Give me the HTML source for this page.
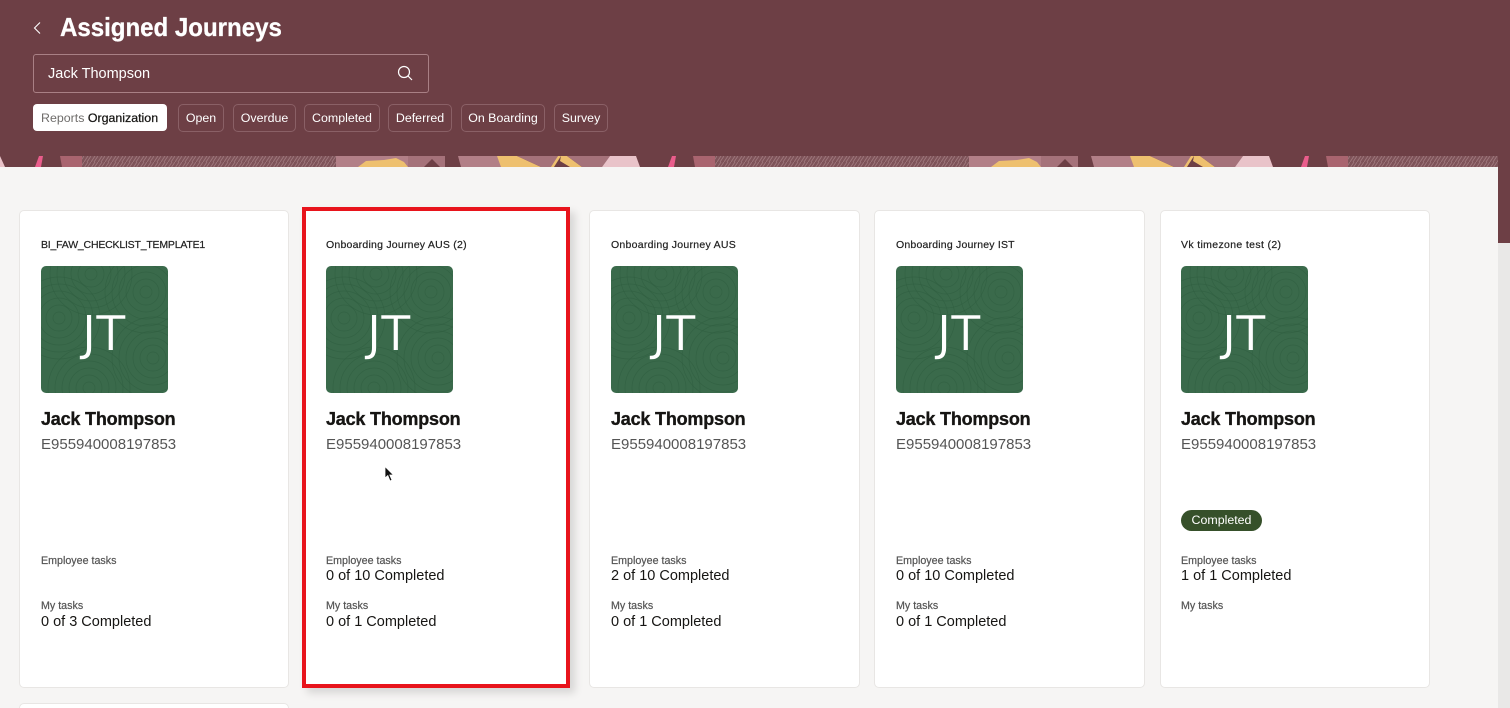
<!DOCTYPE html>
<html style="overflow:hidden;height:708px"><head><meta charset="utf-8"><style>
html,body{margin:0;padding:0}
body{width:1510px;height:708px;overflow:hidden;position:relative;background:#f5f4f2;font-family:"Liberation Sans",sans-serif}
#w{position:absolute;left:0;top:0;width:1510px;height:708px;overflow:hidden}
.a{position:absolute;white-space:nowrap}
.hdr{left:0;top:0;width:1510px;height:156px;background:#6d3f45}
.title{left:60px;top:11px;font-size:26px;line-height:32px;font-weight:700;color:#fff;transform:scaleX(.925);transform-origin:0 0;-webkit-text-stroke:.3px #fff}
.search{left:33px;top:54px;width:394px;height:37px;border:1px solid #a98085;border-radius:3px}
.st{left:48px;top:65px;font-size:14.5px;line-height:18px;color:#fff}
.chip{top:104px;height:26px;border:1px solid #8a6066;border-radius:5px;color:#fff;font-size:12.4px;line-height:26px;text-align:center}
.main{left:0;top:167px;width:1498px;height:541px;background:#f6f5f4}
.card{top:210px;width:268px;height:476px;background:#fff;border:1px solid #e8e6e4;border-radius:5px}
.ct{top:239px;font-size:10.5px;line-height:13px;color:#222;-webkit-text-stroke:.2px #222}
.av{top:266px;width:127px;height:127px}
.jt{top:305px;font:48px/58px "DejaVu Sans",sans-serif;color:#fff;-webkit-text-stroke:.6px #3b6c4d}
.nm{top:408px;font-size:18px;line-height:23px;font-weight:700;color:#161513;letter-spacing:-.2px;-webkit-text-stroke:.35px #161513}
.id{top:436px;font-size:15px;line-height:18px;color:#555}
.lb{font-size:10.7px;line-height:13px;color:#555;-webkit-text-stroke:.2px #555}
.v{font-size:14.5px;line-height:18px;color:#161513}
</style></head><body><div id="w">
<div class="a hdr"></div>
<svg class="a" style="left:0;top:156px" width="1510" height="11" viewBox="0 0 1510 11">
<defs>
<pattern id="wood" width="7" height="6" patternUnits="userSpaceOnUse"><path d="M0 6L4 0M3 6L7 0" stroke="#9f787d" stroke-width=".9" fill="none"/></pattern>
<g id="tile">
<path d="M0 0L5 11L0 11Z" fill="#e9c3c9"/>
<path d="M35 11L39 0L43 0L41 11Z" fill="#ea5d8c"/>
<path d="M60 0L90 0L86 11L62 11Z" fill="#a9646f"/>
<rect x="82" y="0" width="254" height="11" fill="#7e5359"/>
<rect x="82" y="0" width="254" height="11" fill="url(#wood)"/>
<rect x="336" y="0" width="72" height="11" fill="#b27f87"/>
<path d="M358 11L366 5L384 4L396 2L404 6L408 11Z" fill="#eec06f"/>
<path d="M408 0L445 0L445 11L408 11Z" fill="#a5727a"/>
<path d="M424 11L432 3L440 11Z" fill="#6d3f45"/>
<path d="M458 0L497 0L510 11L461 11Z" fill="#b27f87"/>
<path d="M497 0L517 0L541 11L501 11Z" fill="#eec06f"/>
<path d="M517 0L558 0L553 11L541 11Z" fill="#a5727a"/>
<path d="M558 0L561 0L554 11L551 11Z" fill="#eec06f"/>
<path d="M561 0L567 0L582 11L570 11L560 5Z" fill="#eec06f"/>
<path d="M567 0L610 0L602 11L582 11Z" fill="#a5727a"/>
<path d="M610 0L636 0L640 11L602 11Z" fill="#e9c3c9"/>
</g>
</defs>
<rect width="1510" height="11" fill="#6d3f45"/>
<use href="#tile" x="0"/><use href="#tile" x="633"/><use href="#tile" x="1266"/>
<rect x="1498" y="0" width="12" height="11" fill="#6d3f45"/>
</svg>
<div class="a" style="left:1498px;top:160px;width:12px;height:83px;background:#6d3f45"></div>
<div class="a" style="left:1498px;top:243px;width:12px;height:465px;background:#e9e8e7"></div>
<div class="a main"></div>

<svg class="a" style="left:31px;top:20px" width="14" height="16" viewBox="0 0 14 16"><path d="M9 2.500L3.500 8L9 13.500" fill="none" stroke="#fff" stroke-width="1.100"/></svg>
<div class="a title">Assigned Journeys</div>
<div class="a search"></div>
<div class="a st">Jack Thompson</div>
<svg class="a" style="left:396px;top:64px" width="18" height="18" viewBox="0 0 18 18"><circle cx="8" cy="8" r="5.500" fill="none" stroke="#fff" stroke-width="1.200"/><path d="M12 12l4 4" stroke="#fff" stroke-width="1.200"/></svg>

<div class="a" style="left:33px;top:104px;width:134px;height:27px;background:#fff;border-radius:4px"></div>
<div class="a" style="left:41px;top:110px;font-size:12.4px;line-height:16px;color:#6f6d6b">Reports <span style="color:#161513;-webkit-text-stroke:.25px #161513">Organization</span></div>
<div class="a chip" style="left:178px;width:44px">Open</div>
<div class="a chip" style="left:233px;width:61px">Overdue</div>
<div class="a chip" style="left:304px;width:74px">Completed</div>
<div class="a chip" style="left:388px;width:62px">Deferred</div>
<div class="a chip" style="left:461px;width:82px">On Boarding</div>
<div class="a chip" style="left:554px;width:52px">Survey</div>

<svg width="0" height="0" style="position:absolute"><defs>
<clipPath id="avc"><rect width="127" height="127" rx="5"/></clipPath>
<g id="rings" fill="none" stroke="#2f5d40" stroke-opacity=".6" stroke-width=".7">
<circle r="6"/><circle r="13"/><circle r="20"/><circle r="27"/><circle r="34"/><circle r="41"/>
</g>
<symbol id="avatar" viewBox="0 0 127 127"><g clip-path="url(#avc)">
<rect width="127" height="127" fill="#3a6a4b"/>
<use href="#rings" x="18" y="52"/><use href="#rings" x="105" y="26"/><use href="#rings" x="50" y="8"/><use href="#rings" x="112" y="92"/><use href="#rings" x="48" y="122"/>
</g></symbol>
</defs></svg>

<div class="a card" style="left:19px"></div>
<div class="a card" style="left:589px;width:269px"></div>
<div class="a card" style="left:874px;width:269px"></div>
<div class="a card" style="left:1160px"></div>
<div class="a" style="left:19px;top:703px;width:268px;height:20px;background:#fff;border:1px solid #e8e6e4;border-radius:5px"></div>

<div class="a" style="left:302px;top:207px;width:260px;height:473px;background:#fff;border:4px solid #e8141c;box-shadow:5px 5px 8px rgba(0,0,0,.13)"></div>

<div class="a ct" style="left:41px;letter-spacing:-.2px">BI_FAW_CHECKLIST_TEMPLATE1</div>
<svg class="a av" style="left:41px"><use href="#avatar" width="127" height="127"/></svg>
<div class="a jt" style="left:82px">JT</div>
<div class="a nm" style="left:41px">Jack Thompson</div>
<div class="a id" style="left:41px">E955940008197853</div>
<div class="a lb" style="left:41px;top:555px">Employee tasks</div>
<div class="a lb" style="left:41px;top:600px">My tasks</div>
<div class="a v" style="left:41px;top:613px">0 of 3 Completed</div>

<div class="a ct" style="left:326px;letter-spacing:.23px">Onboarding Journey AUS (2)</div>
<svg class="a av" style="left:326px"><use href="#avatar" width="127" height="127"/></svg>
<div class="a jt" style="left:367px">JT</div>
<div class="a nm" style="left:326px">Jack Thompson</div>
<div class="a id" style="left:326px">E955940008197853</div>
<div class="a lb" style="left:326px;top:555px">Employee tasks</div>
<div class="a v" style="left:326px;top:567px">0 of 10 Completed</div>
<div class="a lb" style="left:326px;top:600px">My tasks</div>
<div class="a v" style="left:326px;top:613px">0 of 1 Completed</div>

<div class="a ct" style="left:611px;letter-spacing:.27px">Onboarding Journey AUS</div>
<svg class="a av" style="left:611px"><use href="#avatar" width="127" height="127"/></svg>
<div class="a jt" style="left:652px">JT</div>
<div class="a nm" style="left:611px">Jack Thompson</div>
<div class="a id" style="left:611px">E955940008197853</div>
<div class="a lb" style="left:611px;top:555px">Employee tasks</div>
<div class="a v" style="left:611px;top:567px">2 of 10 Completed</div>
<div class="a lb" style="left:611px;top:600px">My tasks</div>
<div class="a v" style="left:611px;top:613px">0 of 1 Completed</div>

<div class="a ct" style="left:896px;letter-spacing:.2px">Onboarding Journey IST</div>
<svg class="a av" style="left:896px"><use href="#avatar" width="127" height="127"/></svg>
<div class="a jt" style="left:937px">JT</div>
<div class="a nm" style="left:896px">Jack Thompson</div>
<div class="a id" style="left:896px">E955940008197853</div>
<div class="a lb" style="left:896px;top:555px">Employee tasks</div>
<div class="a v" style="left:896px;top:567px">0 of 10 Completed</div>
<div class="a lb" style="left:896px;top:600px">My tasks</div>
<div class="a v" style="left:896px;top:613px">0 of 1 Completed</div>

<div class="a ct" style="left:1181px;letter-spacing:.35px">Vk timezone test (2)</div>
<svg class="a av" style="left:1181px"><use href="#avatar" width="127" height="127"/></svg>
<div class="a jt" style="left:1222px">JT</div>
<div class="a nm" style="left:1181px">Jack Thompson</div>
<div class="a id" style="left:1181px">E955940008197853</div>
<div class="a" style="left:1181px;top:510px;width:81px;height:21px;border-radius:11px;background:#36502a;color:#fff;font-size:12.4px;line-height:21px;text-align:center">Completed</div>
<div class="a lb" style="left:1181px;top:555px">Employee tasks</div>
<div class="a v" style="left:1181px;top:567px">1 of 1 Completed</div>
<div class="a lb" style="left:1181px;top:600px">My tasks</div>

<svg class="a" style="left:383px;top:465px" width="12" height="18" viewBox="0 0 12 18"><path d="M2 1.500V13l2.800-2.400L7 16l2-.9-2.200-5.100H10.500Z" fill="#111" stroke="#fff" stroke-width=".8"/></svg>
</div></body></html>
